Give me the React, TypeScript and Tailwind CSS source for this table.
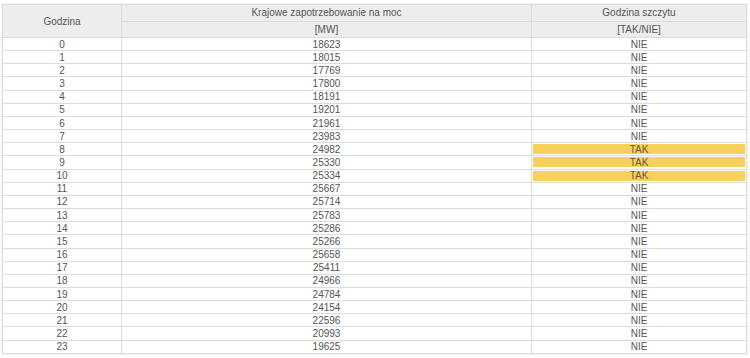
const values = [18623, 18015, 17769, 17800, 18191, 19201, 21961, 23983, 24982, 25330, 25334, 25667, 25714, 25783, 25286, 25266, 25658, 25411, 24966, 24784, 24154, 22596, 20993, 19625];

export default function App() {
  return (
    <div className="w-[750px] h-[358px] bg-white pt-[4px] pl-[2px]" style={{ fontFamily: '"Liberation Sans", Arial, sans-serif' }}>
      <table className="border-collapse text-[10px] leading-none text-[#555] shadow-[0_0_2px_rgba(0,0,0,0.15)]" style={{ tableLayout: 'fixed', width: 744 }}>
        <colgroup>
          <col style={{ width: 119 }} />
          <col style={{ width: 410 }} />
          <col style={{ width: 215 }} />
        </colgroup>
        <thead>
          <tr className="h-[17px] bg-[#ededed]">
            <th rowSpan={2} className="border border-[#dcdcdc] font-normal text-center align-middle pt-[2px]">Godzina</th>
            <th className="border border-[#dcdcdc] font-normal text-center align-middle">Krajowe zapotrzebowanie na moc</th>
            <th className="border border-[#dcdcdc] font-normal text-center align-middle">Godzina szczytu</th>
          </tr>
          <tr className="h-[16px] bg-[#ededed]">
            <th className="border border-[#dcdcdc] font-normal text-center align-middle pt-[1px]">[MW]</th>
            <th className="border border-[#dcdcdc] font-normal text-center align-middle pt-[1px]">[TAK/NIE]</th>
          </tr>
        </thead>
        <tbody>
          {values.map((v, i) => {
            const peak = i >= 8 && i <= 10;
            return (
              <tr key={i} className="h-[13.17px]">
                <td className="border border-[#dcdcdc] text-center align-middle p-0 pt-[1px]">{i}</td>
                <td className="border border-[#dcdcdc] text-center align-middle p-0 pt-[1px]">{v}</td>
                <td className={peak ? 'border border-[#dcdcdc] text-center align-middle p-[1px]' : 'border border-[#dcdcdc] text-center align-middle p-0 pt-[1px]'}>
                  {peak ? (
                    <div className="bg-[#f8cf5b] h-[10px] flex items-center justify-center pt-[1px] text-[#6b5a3a]">TAK</div>
                  ) : (
                    'NIE'
                  )}
                </td>
              </tr>
            );
          })}
        </tbody>
      </table>
    </div>
  );
}
